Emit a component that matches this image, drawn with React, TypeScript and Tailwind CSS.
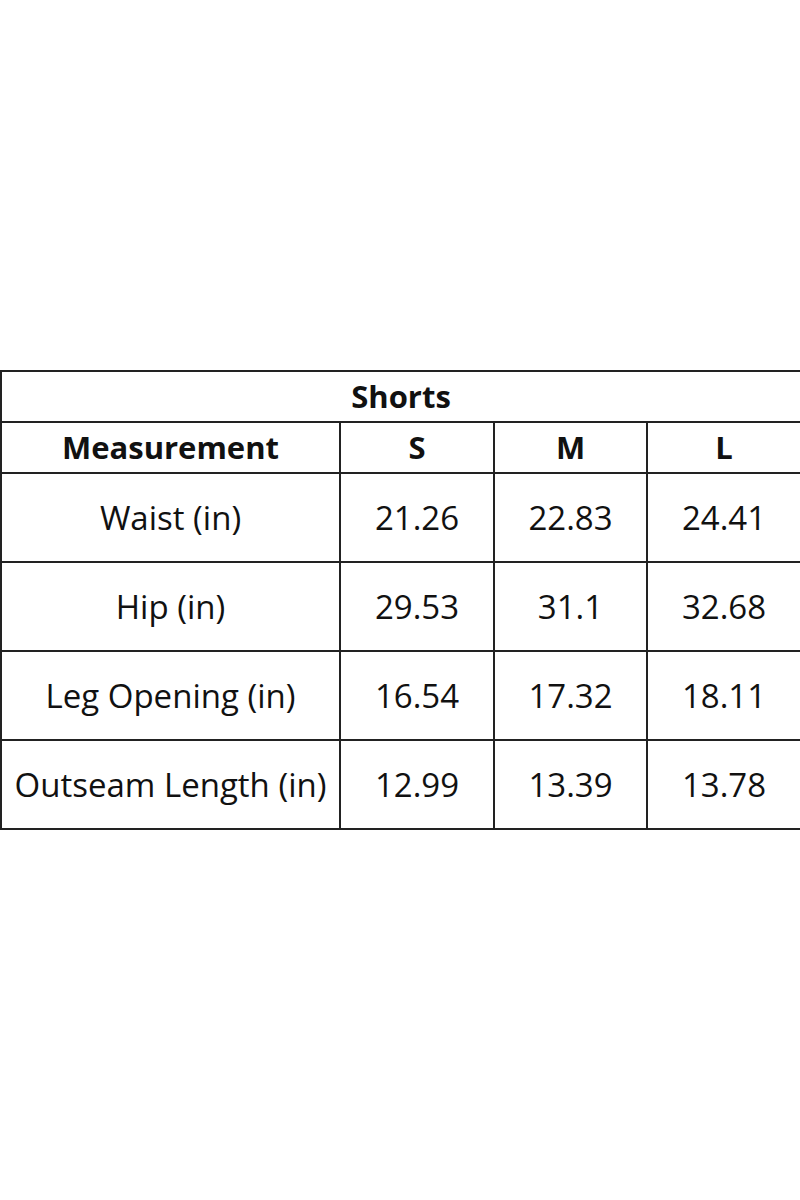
const sizes = ['S', 'M', 'L'];

const rows = [
  { label: 'Waist (in)', values: ['21.26', '22.83', '24.41'] },
  { label: 'Hip (in)', values: ['29.53', '31.1', '32.68'] },
  { label: 'Leg Opening (in)', values: ['16.54', '17.32', '18.11'] },
  { label: 'Outseam Length (in)', values: ['12.99', '13.39', '13.78'] },
];

export default function App() {
  return (
    <div
      className="flex h-[1200px] w-[800px] flex-col justify-center bg-white text-[#111]"
      style={{ fontFamily: '"Open Sans", "Noto Sans", sans-serif' }}
    >
      <table className="w-[800px] table-fixed border-collapse border-2 border-[#222]">
        <colgroup>
          <col className="w-[339px]" />
          <col className="w-[154px]" />
          <col className="w-[153px]" />
          <col className="w-[154px]" />
        </colgroup>
        <thead>
          <tr className="h-[51px]">
            <th colSpan={4} className="border-2 border-[#222] p-0 text-center text-[31px] leading-none font-bold">
              Shorts
            </th>
          </tr>
          <tr className="h-[51px]">
            <th className="border-2 border-[#222] p-0 text-center text-[31px] leading-none font-bold">Measurement</th>
            {sizes.map((s) => (
              <th key={s} className="border-2 border-[#222] p-0 text-center text-[31px] leading-none font-bold">
                {s}
              </th>
            ))}
          </tr>
        </thead>
        <tbody>
          {rows.map((row) => (
            <tr key={row.label} className="h-[89px]">
              <td className="border-2 border-[#222] p-0 text-center text-[33px] leading-none">{row.label}</td>
              {row.values.map((v, i) => (
                <td key={i} className="border-2 border-[#222] p-0 text-center text-[33px] leading-none">
                  {v}
                </td>
              ))}
            </tr>
          ))}
        </tbody>
      </table>
    </div>
  );
}
